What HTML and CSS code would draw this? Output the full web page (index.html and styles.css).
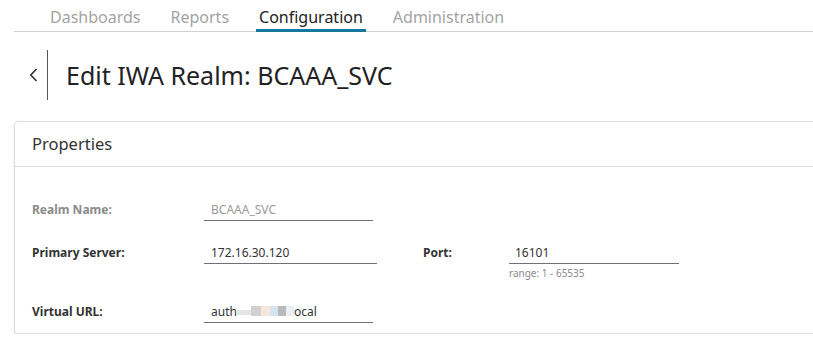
FILE: index.html
```html
<!DOCTYPE html>
<html lang="en">

<head>
    <meta charset="UTF-8">
    <meta name="viewport" content="width=device-width, initial-scale=1.0">
    <title>Edit IWA Realm</title>
    <link rel="stylesheet" href="styles.css">
</head>

<body>

    <!-- top tabs -->
    <div class="topnav">
        <a class="tab">Dashboards</a>
        <a class="tab">Reports</a>
        <a class="tab active">Configuration</a>
        <a class="tab">Administration</a>
    </div>

    <div class="page-head">
        <a class="back">
            <svg width="9" height="14" viewBox="0 0 9 14">
                <path d="M7.5 1 L1.8 7 L7.5 13" fill="none" stroke="#333" stroke-width="1.6" />
            </svg>
        </a>
        <h1>Edit IWA Realm: BCAAA_SVC</h1>
    </div>

    <div class="card">
        <div class="card-head">Properties</div>

        <div class="card-body">
            <div class="row">
                <label class="disabled">Realm Name:</label>
                <div class="field">
                    <div class="input disabled">BCAAA_SVC</div>
                </div>
            </div>

            <div class="row">
                <label>Primary Server:</label>
                <div class="field">
                    <div class="input wide">172.16.30.120</div>
                </div>
                <label class="second">Port:</label>
                <div class="field">
                    <div class="input port">16101</div>
                    <div class="hint">range: 1 - 65535</div>
                </div>
            </div>

            <div class="row">
                <label>Virtual URL:</label>
                <div class="field">
                    <div class="input">auth<span class="mosaic"><i class="m1"></i><i class="m2"></i><i class="m3"></i><i class="m4"></i><i class="m5"></i><i class="m6"></i></span>ocal</div>
                </div>
            </div>
        </div>
    </div>

</body>

</html>
```

FILE: styles.css
```css
* {
    margin: 0;
    padding: 0;
    box-sizing: border-box;
    font-family: "Noto Sans", "Open Sans", sans-serif;
}

body {
    background-color: #fff;
    color: #222;
    overflow: hidden;
}

/* tabs */
.topnav {
    display: flex;
    gap: 24px;
    margin-left: 14px;
    padding-left: 33px;
    height: 32px;
    border-bottom: 1px solid #cfcfcf;
}

.tab {
    display: block;
    font-size: 16px;
    line-height: 22px;
    padding: 6px 3px 0;
    height: 32px;
    color: #a3a3a3;
    cursor: pointer;
}

.tab.active {
    color: #222;
    border-bottom: 3px solid #1479a0;
}

/* page title */
.page-head {
    display: flex;
    align-items: center;
    margin-top: 18px;
    height: 50px;
}

.back {
    display: flex;
    align-items: center;
    height: 50px;
    padding-left: 29px;
    padding-right: 9px;
    border-right: 1px solid #555;
}

.page-head h1 {
    font-size: 25px;
    font-weight: 400;
    color: #222;
    margin-left: 18px;
}

/* card */
.card {
    margin: 21px -20px 0 14px;
    border: 1px solid #dcdcdc;
    border-radius: 4px;
    box-shadow: 0 2px 2px rgba(0, 0, 0, 0.14);
}

.card-head {
    height: 45px;
    line-height: 44px;
    padding-left: 17px;
    font-size: 16.5px;
    color: #333;
    border-bottom: 1px solid #dcdcdc;
}

.card-body {
    display: flex;
    flex-direction: column;
    gap: 18px;
    padding: 29px 0 10px 17px;
}

.row {
    display: flex;
    align-items: flex-start;
}

.row label {
    width: 172px;
    font-size: 12px;
    font-weight: 700;
    line-height: 20px;
    padding-top: 4px;
    color: #333;
}

.row label.second {
    width: 86px;
    margin-left: 46px;
}

.row label.disabled {
    color: #8a8a8a;
}

.input {
    width: 169px;
    height: 25px;
    line-height: 20px;
    padding: 4px 0 0 7px;
    font-size: 12px;
    color: #333;
    border-bottom: 1px solid #6c7176;
    white-space: nowrap;
}

.input.wide {
    width: 173px;
}

.input.port {
    width: 170px;
    padding-left: 6px;
}

.input.disabled {
    color: #9a9a9a;
}

.hint {
    font-size: 10px;
    line-height: 14px;
    margin-top: 2px;
    color: #8a8a8a;
}

/* blurred part of the url */
.mosaic {
    display: inline-flex;
    vertical-align: middle;
    height: 10px;
    margin-top: -3px;
}

.mosaic i {
    display: block;
    height: 10px;
}

.mosaic .m1 { width: 14px; background: #e4e4e4; height: 5px; margin-top: 4px; }
.mosaic .m2 { width: 10px; background: #d2d0ce; }
.mosaic .m3 { width: 9px; background: #f3e6da; }
.mosaic .m4 { width: 8px; background: #d4e4f2; }
.mosaic .m5 { width: 8px; background: #b9b9bb; }
.mosaic .m6 { width: 8px; background: #e9eef4; }
```
